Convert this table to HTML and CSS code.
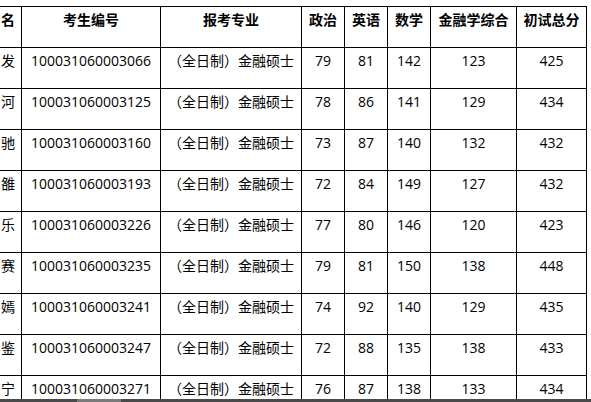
FILE: index.html
```html
<!DOCTYPE html>
<html lang="zh-CN">
<head>
<meta charset="utf-8">
<title>成绩</title>
<link rel="stylesheet" href="styles.css">
</head>
<body>
<div class="viewport">
  <table class="scores">
    <colgroup>
      <col class="c-name"><col class="c-id"><col class="c-major"><col class="c-s"><col class="c-s"><col class="c-s"><col class="c-fin"><col class="c-total">
    </colgroup>
    <thead>
      <tr><th class="name">名</th><th>考生编号</th><th>报考专业</th><th>政治</th><th>英语</th><th>数学</th><th>金融学综合</th><th>初试总分</th></tr>
    </thead>
    <tbody>
      <tr><td class="name">发</td><td>100031060003066</td><td>（全日制）金融硕士</td><td>79</td><td>81</td><td>142</td><td>123</td><td>425</td></tr>
      <tr><td class="name">河</td><td>100031060003125</td><td>（全日制）金融硕士</td><td>78</td><td>86</td><td>141</td><td>129</td><td>434</td></tr>
      <tr><td class="name">驰</td><td>100031060003160</td><td>（全日制）金融硕士</td><td>73</td><td>87</td><td>140</td><td>132</td><td>432</td></tr>
      <tr><td class="name">雒</td><td>100031060003193</td><td>（全日制）金融硕士</td><td>72</td><td>84</td><td>149</td><td>127</td><td>432</td></tr>
      <tr><td class="name">乐</td><td>100031060003226</td><td>（全日制）金融硕士</td><td>77</td><td>80</td><td>146</td><td>120</td><td>423</td></tr>
      <tr><td class="name">赛</td><td>100031060003235</td><td>（全日制）金融硕士</td><td>79</td><td>81</td><td>150</td><td>138</td><td>448</td></tr>
      <tr><td class="name">嫣</td><td>100031060003241</td><td>（全日制）金融硕士</td><td>74</td><td>92</td><td>140</td><td>129</td><td>435</td></tr>
      <tr><td class="name">鉴</td><td>100031060003247</td><td>（全日制）金融硕士</td><td>72</td><td>88</td><td>135</td><td>138</td><td>433</td></tr>
      <tr><td class="name">宁</td><td>100031060003271</td><td>（全日制）金融硕士</td><td>76</td><td>87</td><td>138</td><td>133</td><td>434</td></tr>
    </tbody>
  </table>
  <div class="hscroll"><div class="thumb"></div></div>
</div>
</body>
</html>
```
FILE: styles.css
```css
html, body {
  margin: 0;
  padding: 0;
  background: #fff;
}
.viewport {
  position: relative;
  width: 591px;
  height: 402px;
  overflow: hidden;
  padding-top: 6px;
  box-sizing: border-box;
}
.scores {
  border-collapse: collapse;
  table-layout: fixed;
  width: 625px;
  margin-left: -39px;
  font-family: "Open Sans", "Noto Sans CJK SC", sans-serif;
  font-size: 14px;
  color: #000;
}
.c-name { width: 60px; }
.c-id { width: 139px; }
.c-major { width: 141px; }
.c-s { width: 43px; }
.c-fin { width: 86px; }
.c-total { width: 70px; }
.scores th,
.scores td {
  border: 1px solid #000;
  height: 41px;
  padding: 3px 0 0;
  box-sizing: border-box;
  vertical-align: top;
  text-align: center;
  line-height: 19px;
  white-space: nowrap;
  overflow: hidden;
}
.scores th {
  font-weight: bold;
}
.scores .name {
  text-align: right;
  padding-right: 6px;
}
.hscroll {
  position: absolute;
  left: 0;
  right: 0;
  bottom: 0;
  height: 3px;
  background: #4a4a4a;
}
.thumb {
  margin-left: 77px;
  width: 44px;
  height: 3px;
  background: #7a7a7a;
}
```
